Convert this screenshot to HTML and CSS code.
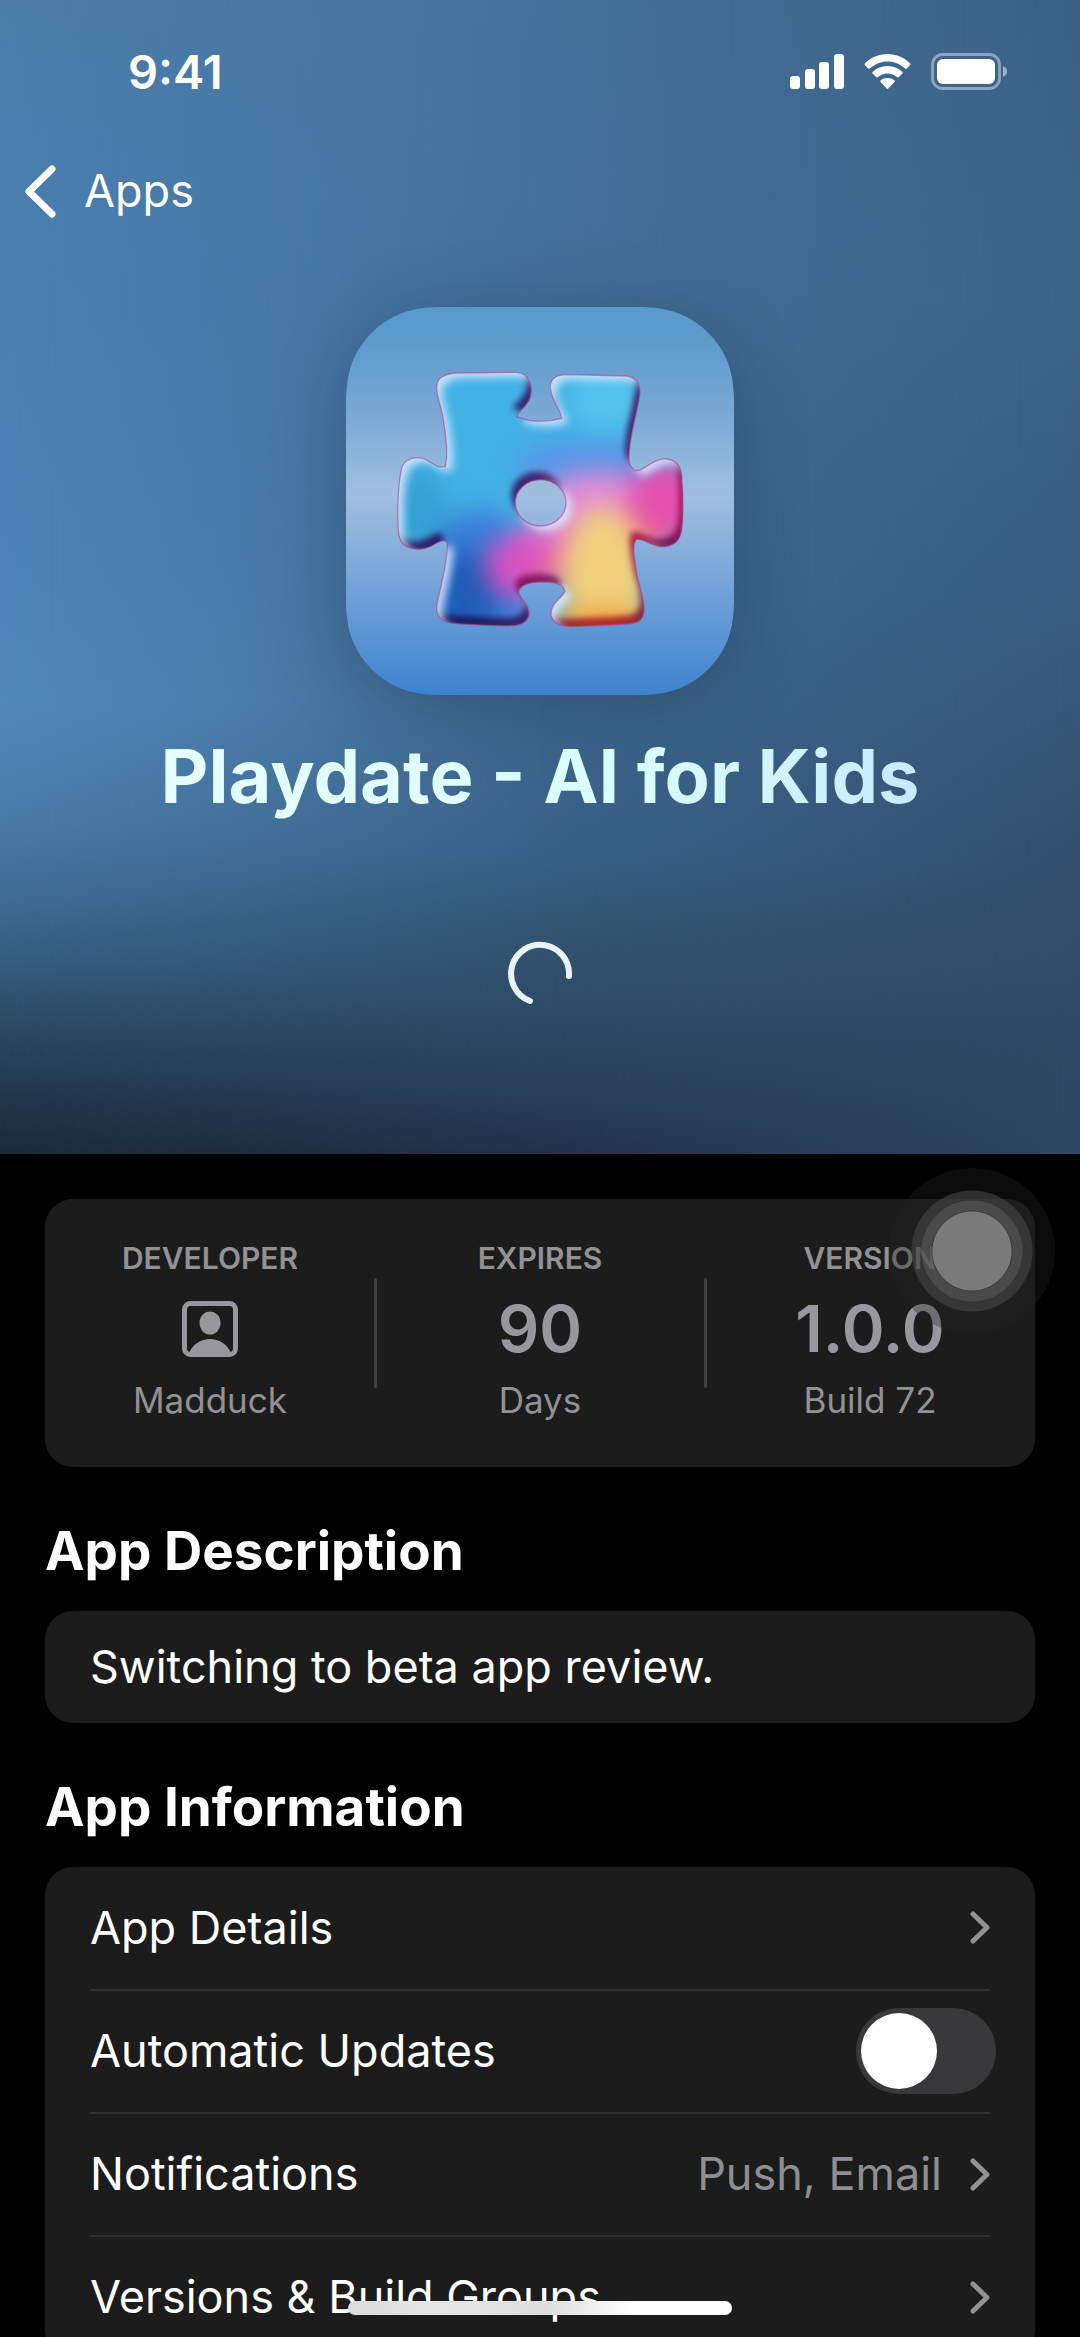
FILE: index.html
```html
<!DOCTYPE html>
<html lang="en">
<head>
<meta charset="utf-8">
<meta name="viewport" content="width=device-width, initial-scale=1">
<title>Playdate - AI for Kids</title>
<link rel="stylesheet" href="styles.css">
</head>
<body>
<div class="screen">
  <header class="hero">
    <div class="status">
      <span class="time">9:41</span>
      <div class="status-icons">
        <svg width="54" height="36" viewBox="0 0 54 36" fill="#fff" aria-hidden="true">
          <rect x="0" y="22" width="10" height="13" rx="3"/><rect x="15" y="15" width="10" height="20" rx="3"/><rect x="29" y="8" width="10" height="27" rx="3"/><rect x="44" y="0" width="10" height="35" rx="3"/>
        </svg>
        <svg width="47" height="36" viewBox="0 0 47 36" fill="#fff" aria-hidden="true">
          <path d="M23.500 0C32.500 0 40 3.500 46 9.200Q47 10.200 46 11.200L42.800 14.400Q41.800 15.200 40.800 14.300C36 9.800 30 7.400 23.500 7.400S11 9.800 6.200 14.300Q5.200 15.200 4.200 14.400L1 11.200Q0 10.200 1 9.200C7 3.500 14.500 0 23.500 0Z"/>
          <path d="M23.500 12C29.400 12 34.200 14.200 38.200 17.700Q39.200 18.700 38.200 19.700L34.900 22.900Q33.900 23.800 32.900 23C30.200 20.700 27 19.500 23.500 19.500S16.800 20.700 14.100 23Q13.100 23.800 12.100 22.900L8.800 19.700Q7.800 18.700 8.800 17.700C12.800 14.200 17.600 12 23.500 12Z"/>
          <path d="M23.500 24C26.300 24 28.500 24.900 30.300 26.300Q31.300 27.200 30.300 28.200L24.500 34.200Q23.500 35.200 22.500 34.200L16.700 28.200Q15.700 27.200 16.700 26.300C18.500 24.900 20.700 24 23.500 24Z"/>
        </svg>
        <svg width="77" height="38" viewBox="0 0 77 38" aria-hidden="true">
          <rect x="1.500" y="1.500" width="67" height="34" rx="10" fill="none" stroke="#fff" stroke-opacity=".42" stroke-width="2.800"/>
          <rect x="6" y="6" width="58" height="25" rx="6" fill="#fff"/>
          <path d="M72 13Q76 15 76 18.500T72 24Z" fill="#fff" fill-opacity=".5"/>
        </svg>
      </div>
    </div>
    <nav class="nav">
      <a class="back" href="#apps">
        <svg width="31" height="53" viewBox="0 0 31 53" fill="none" stroke="#fff" stroke-width="7" stroke-linecap="round" stroke-linejoin="round" aria-hidden="true"><path d="M27 4 4 26.500 27 49"/></svg>
        <span>Apps</span>
      </a>
    </nav>
    <svg class="app-icon" viewBox="48 51 1164 1164" role="img" aria-label="Playdate app icon">
      <defs>
        <linearGradient id="sky" x1="0" y1="0" x2="0" y2="1">
          <stop offset="0" stop-color="#5999cb"/><stop offset=".1" stop-color="#5e9bcd"/><stop offset=".28" stop-color="#7ca9d6"/><stop offset=".48" stop-color="#a0bfe0"/><stop offset=".56" stop-color="#94b5dd"/><stop offset=".72" stop-color="#74a3d9"/><stop offset=".88" stop-color="#5591d3"/><stop offset="1" stop-color="#3e82cf"/>
        </linearGradient>
        <path id="piece" fill-rule="evenodd" clip-rule="evenodd" d="M330 265Q350 250 380 249L560 247C600 250 610 290 600 325C590 350 565 365 560 380C600 397 650 397 695 385C690 350 660 330 661 290C662 265 680 254 710 254L890 258C920 262 930 280 930 310C920 380 895 450 897 510C900 535 915 545 930 540C960 525 980 505 1010 507C1040 510 1053 530 1055 560C1060 620 1060 680 1055 720C1050 760 1020 772 990 770C960 765 940 745 920 748C905 760 912 800 920 850C930 900 945 930 942 965C938 995 920 1000 890 1002C830 1006 770 1008 720 1010C690 1008 668 1000 663 975C662 940 690 930 705 905C700 885 690 878 640 876C600 876 572 882 566 905C570 930 600 940 597 975C590 1000 570 1008 530 1008C470 1006 410 1004 370 1000C335 996 318 980 320 950C330 890 352 830 352 760C345 745 325 755 305 768C285 778 255 782 230 770C205 755 205 730 204 700C202 650 205 590 212 550C215 510 245 498 280 505C305 515 320 535 345 530C355 500 350 450 340 390C335 350 318 320 320 290C321 275 325 270 330 265ZM556 638C556 600 590 569 632 569S708 600 708 638S674 708 632 708S556 676 556 638Z"/>
        <clipPath id="piece-clip"><use href="#piece" clip-rule="evenodd"/></clipPath>
        <filter id="soft" x="-60%" y="-60%" width="220%" height="220%" color-interpolation-filters="sRGB"><feGaussianBlur stdDeviation="38"/></filter>
        <filter id="bevel" x="-5%" y="-5%" width="110%" height="110%" color-interpolation-filters="sRGB">
          <feOffset in="SourceAlpha" dx="-12" dy="-24"/><feGaussianBlur stdDeviation="10" result="d"/>
          <feComposite in="SourceAlpha" in2="d" operator="out" result="dm"/>
          <feFlood flood-color="#b83a7c"/><feComposite in2="dm" operator="in" result="dark"/>
          <feBlend in="dark" in2="SourceGraphic" mode="multiply" result="shaded"/>
          <feOffset in="SourceAlpha" dx="18" dy="16"/><feGaussianBlur stdDeviation="12" result="l"/>
          <feComposite in="SourceAlpha" in2="l" operator="out" result="lm"/>
          <feFlood flood-color="#dceaff" flood-opacity=".85"/><feComposite in2="lm" operator="in" result="light"/>
          <feMerge><feMergeNode in="shaded"/><feMergeNode in="light"/></feMerge>
        </filter>
      </defs>
      <path fill="url(#sky)" d="M48 340C48 150 147 51 337 51H923C1113 51 1212 150 1212 340V926C1212 1116 1113 1215 923 1215H337C147 1215 48 1116 48 926Z"/>
      <g filter="url(#bevel)">
        <g clip-path="url(#piece-clip)">
          <rect x="190" y="230" width="880" height="800" fill="#42b2e6"/>
          <g filter="url(#soft)">
            <ellipse cx="830" cy="330" rx="120" ry="90" fill="#55c4ee"/>
            <ellipse cx="260" cy="660" rx="90" ry="120" fill="#36a0d4"/>
            <ellipse cx="780" cy="530" rx="230" ry="75" fill="#5a94e8"/>
            <ellipse cx="450" cy="870" rx="170" ry="210" fill="#3a7cd8"/>
            <ellipse cx="400" cy="930" rx="100" ry="150" fill="#1f5cb8"/>
            <ellipse cx="810" cy="660" rx="190" ry="115" fill="#e48cd4"/>
            <ellipse cx="640" cy="780" rx="120" ry="80" fill="#e070cc"/>
            <ellipse cx="1010" cy="640" rx="120" ry="130" fill="#e450b0"/>
            <ellipse cx="560" cy="830" rx="95" ry="95" fill="#d850c4"/>
            <ellipse cx="660" cy="830" rx="60" ry="50" fill="#ea5aa0"/>
            <ellipse cx="825" cy="850" rx="135" ry="200" fill="#f0cf7c"/>
            <ellipse cx="810" cy="1010" rx="160" ry="60" fill="#f2a640"/>
            <ellipse cx="970" cy="730" rx="50" ry="45" fill="#ee5a8e"/>
          </g>
        </g>
      </g>
      <use href="#piece" fill="none" stroke="#b8408f" stroke-opacity=".6" stroke-width="4"/>
    </svg>
    <h1 class="title">Playdate - AI for Kids</h1>
    <svg class="spinner" width="64" height="64" viewBox="0 0 64 64" role="img" aria-label="Loading"><path d="M61 35A29 29 0 1 0 22 60" fill="none" stroke="#eaf1f8" stroke-width="6" stroke-linecap="round"/></svg>
  </header>

  <main class="content">
    <dl class="card stats">
      <div class="stat">
        <dt>DEVELOPER</dt>
        <dd class="value"><svg width="56" height="56" viewBox="0 0 56 56" aria-hidden="true"><rect x="2.500" y="2.500" width="51" height="51" rx="6" fill="none" stroke="#98979e" stroke-width="5"/><ellipse cx="28" cy="22" rx="10.500" ry="11.500" fill="#98979e"/><path d="M7 52C11 43 19 38 28 38S45 43 49 52V54H7Z" fill="#98979e"/></svg></dd>
        <dd>Madduck</dd>
      </div>
      <div class="stat">
        <dt>EXPIRES</dt>
        <dd class="value">90</dd>
        <dd>Days</dd>
      </div>
      <div class="stat">
        <dt>VERSION</dt>
        <dd class="value">1.0.0</dd>
        <dd>Build 72</dd>
      </div>
    </dl>

    <h2>App Description</h2>
    <p class="card description">Switching to beta app review.</p>

    <h2>App Information</h2>
    <ul class="card list">
      <li><a class="row" href="#details"><span>App Details</span><svg class="chevron" width="20" height="33" viewBox="0 0 20 33" aria-hidden="true"><path d="M3 3 17 16.500 3 30"/></svg></a></li>
      <li><label class="row"><span>Automatic Updates</span><input class="switch" type="checkbox" role="switch"></label></li>
      <li><a class="row" href="#notifications"><span>Notifications</span><span class="detail">Push, Email</span><svg class="chevron" width="20" height="33" viewBox="0 0 20 33" aria-hidden="true"><path d="M3 3 17 16.500 3 30"/></svg></a></li>
      <li><a class="row" href="#versions"><span>Versions &amp; Build Groups</span><svg class="chevron" width="20" height="33" viewBox="0 0 20 33" aria-hidden="true"><path d="M3 3 17 16.500 3 30"/></svg></a></li>
    </ul>
  </main>
  <button class="assistive" type="button" aria-label="AssistiveTouch"></button>
  <div class="home-bar"></div>
</div>
</body>
</html>
```
FILE: styles.css
```css
* { box-sizing: border-box; }

body {
  margin: 0;
  background: #000;
  color: #fff;
  font: 400 45px/60px Inter, "Liberation Sans", sans-serif;
}

h1, h2, p, dl, dd, ul { margin: 0; padding: 0; }
a { color: inherit; text-decoration: none; }
svg { display: block; flex: none; }

.screen {
  position: relative;
  height: 100vh;
  overflow: hidden;
}

/* Hero: three vertical colour ramps blended from left to right */
.hero {
  position: relative;
  isolation: isolate;
  display: flex;
  flex-direction: column;
  align-items: center;
  padding-bottom: 149px;
  background: linear-gradient(#4c7da9, #4a7eaf 13%, #4a7fb2 26%, #4d83b8 48%, #5288bb 61%, #4a7ba8 71%, #3f6b94 78%, #365a7c 84%, #2d4d68 88%, #243a50 94%, #1d2a38);
}
.hero::before, .hero::after {
  content: "";
  position: absolute;
  inset: 0;
  z-index: -1;
}
.hero::before {
  background: linear-gradient(#44729b, #44719c 17%, #426c95 40%, #3f6890 61%, #3a6088 74%, #335672 80%, #2e4c69 87%, #2a415c 94%, #22324b);
  mask-image: linear-gradient(to right, transparent, rgba(0, 0, 0, .36) 22%, #000 50%);
}
.hero::after {
  background: linear-gradient(#3c6085, #3e6389 26%, #395c80 52%, #375777 61%, #32506d 74%, #2f4a66 87%, #2d4763);
  mask-image: linear-gradient(to right, transparent 50%, #000);
}

.status {
  align-self: stretch;
  display: flex;
  justify-content: space-between;
  align-items: center;
  padding: 42px 72px 42px 128px;
}
.time { font-size: 47px; font-weight: 600; }
.status-icons { display: flex; align-items: center; gap: 20px; }

.nav { align-self: stretch; padding: 17px 25px 0; }
.back { display: inline-flex; align-items: center; gap: 28px; }

.app-icon {
  width: 388px;
  height: 388px;
  margin-top: 75px;
  border-radius: 88px;
  box-shadow: 0 12px 72px rgba(16, 32, 52, .3);
}
.title {
  margin-top: 36px;
  font-size: 74px;
  line-height: 90px;
  font-weight: 700;
  background: linear-gradient(to right, #e6ffff, #dafeff 60%, #c8eaff);
  background-clip: text;
  color: transparent;
}
.spinner { margin-top: 120px; overflow: visible; }

.content { padding: 45px 45px 0; }
.card { border-radius: 28px; background: #1c1c1c; }

.stats {
  display: grid;
  grid-template-columns: repeat(3, 1fr);
  padding: 35px 0 43px;
  color: #929295;
  font-size: 35px;
  line-height: 48px;
  text-align: center;
}
.stat {
  position: relative;
  display: flex;
  flex-direction: column;
  align-items: center;
}
.stat + .stat::before {
  content: "";
  position: absolute;
  left: -1px;
  top: 44px;
  bottom: 36px;
  width: 3px;
  border-radius: 2px;
  background: #404041;
}
.stat dt { font-size: 30px; font-weight: 600; }
.stat .value {
  display: flex;
  align-items: center;
  height: 94px;
  color: #98979e;
  font-size: 65px;
  font-weight: 600;
}

h2 {
  padding: 50px 0 25px;
  font-size: 53px;
  line-height: 69px;
  font-weight: 700;
}
.description { padding: 26px 45px; }

.list { padding: 0 45px; list-style: none; }
.list li + li { border-top: 2px solid #303031; }
.row {
  display: flex;
  align-items: center;
  gap: 28px;
  height: 121px;
}
.list li:first-child .row { height: 122px; }
.row > :nth-child(2) { margin-left: auto; }
.detail { color: #8e8e93; }
.chevron {
  fill: none;
  stroke: #929293;
  stroke-width: 5;
  stroke-linecap: round;
  stroke-linejoin: round;
}
.row .switch {
  appearance: none;
  flex: none;
  display: flex;
  width: 140px;
  height: 86px;
  margin: 0 -6px 0 auto;
  padding: 5px;
  border-radius: 43px;
  background: #39393b;
}
.switch::before {
  content: "";
  width: 76px;
  height: 76px;
  border-radius: 50%;
  background: #fff;
}
.switch:checked { justify-content: flex-end; background: #30d158; }

/* Floating assistive button over the page */
.assistive {
  position: absolute;
  top: 1168px;
  right: 25px;
  width: 166px;
  height: 166px;
  padding: 0;
  border: 0;
  border-radius: 50%;
  background: radial-gradient(circle,
    #7a7a7a 0 39px, rgba(62, 62, 62, .9) 40px,
    rgba(84, 84, 84, .82) 41px 50px, rgba(56, 56, 56, .85) 51px,
    rgba(66, 66, 66, .7) 52px 60px, rgba(34, 34, 34, .35) 61px);
}

.home-bar {
  position: absolute;
  left: 50%;
  bottom: 22px;
  width: 384px;
  height: 14px;
  border-radius: 7px;
  background: linear-gradient(to right, #dcdcdc, #e6e6e6 25%, #dedede 52%, #fff 74%);
  transform: translateX(-50%);
}
```
